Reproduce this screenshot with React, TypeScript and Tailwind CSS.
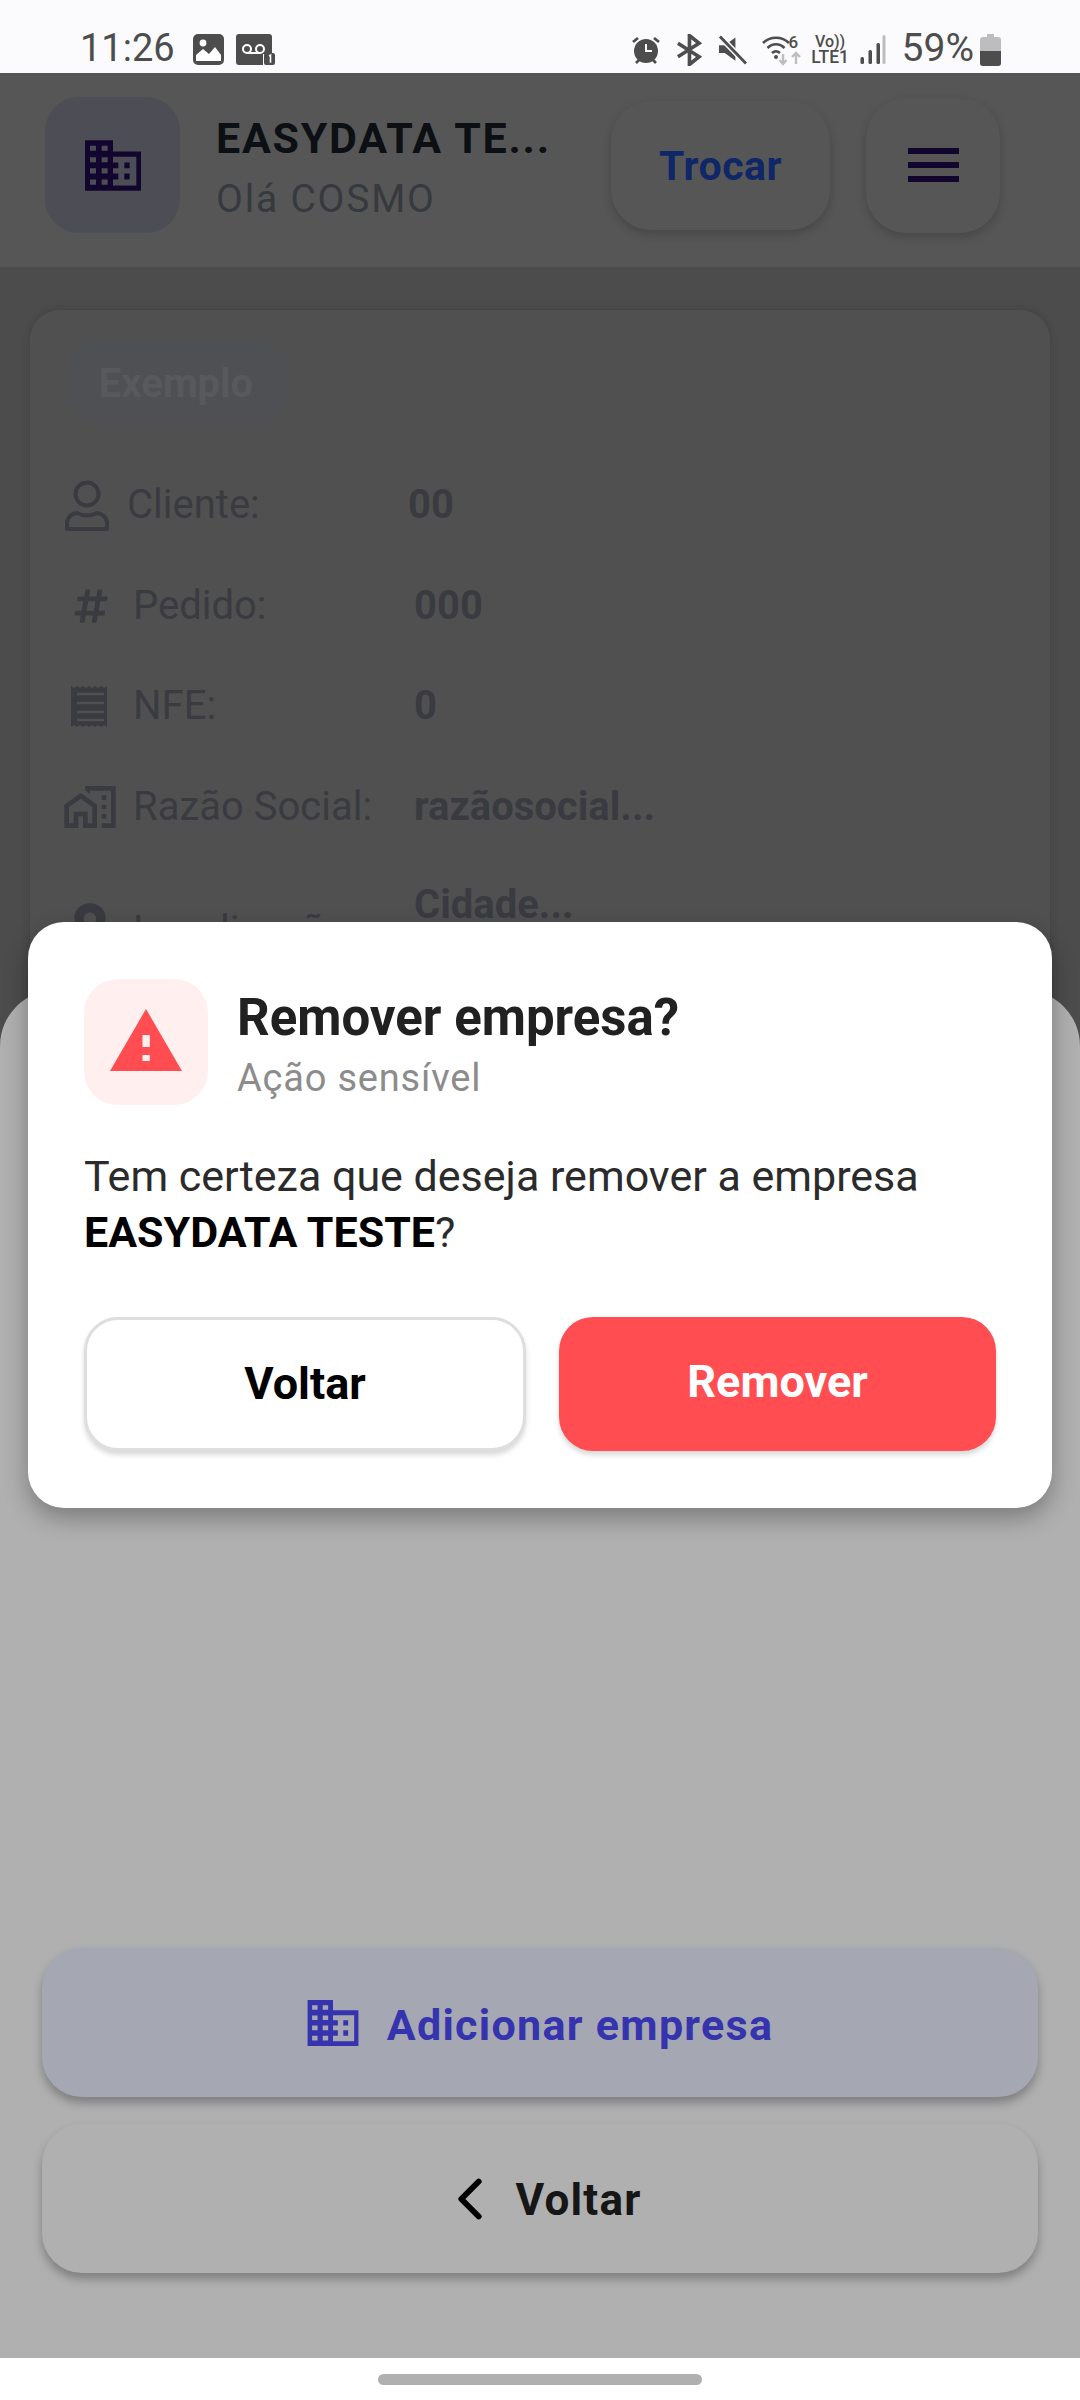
import React from "react";
import { IoChevronBack, IoLocationSharp } from "react-icons/io5";
import { MdOutlineHomeWork } from "react-icons/md";
import { FaHashtag } from "react-icons/fa";

function BuildingIcon({ className }: { className?: string }) {
  return (
    <svg viewBox="0 0 168 152" className={className} fill="currentColor" fillRule="evenodd">
      <path d="M0 0h84v34h84v118H0z M15 17v15h18V17z M50 17v15h18V17z M15 51v15h18V51z M50 51v15h18V51z M15 84v16h18V84z M50 84v16h18V84z M15 118v16h18v-16z M50 118v16h18v-16z M84 50v17h16v17H84v16h16v18H84v18h70V50z" />
      <path d="M118 67h16v17h-16z M118 100h16v18h-16z" />
    </svg>
  );
}

function PersonIcon() {
  return (
    <svg viewBox="0 0 44 51" className="w-[44px] h-[51px]" fill="none" stroke="currentColor" strokeWidth="4">
      <circle cx="22" cy="14" r="11.500" />
      <path d="M2 49v-6c0-6 6-10 10-10 3 1.500 6 2.500 10 2.500s7-1 10-2.500c4 0 10 4 10 10v6z" strokeLinejoin="round" />
    </svg>
  );
}

function ReceiptIcon() {
  return (
    <svg viewBox="0 0 39 41" className="w-[39px] h-[41px]">
      <path
        d="M0 0l3 2 3-2 3 2 3-2 3 2 3-2 3 2 3-2 3 2 3-2 3 2 3-2v41l-3-2-3 2-3-2-3 2-3-2-3 2-3-2-3 2-3-2-3 2-3-2-3 2z"
        fill="currentColor"
      />
      <path d="M6 8h27M6 17h27M6 26h27M6 34h27" stroke="#505050" strokeWidth="2.400" />
    </svg>
  );
}

function WarningIcon() {
  return (
    <svg viewBox="0 0 72 62" className="w-[72px] h-[62px] mb-[4px]">
      <path d="M36 0l36 62H0z" fill="#ff4d52" />
      <path d="M32.500 26h7.300v12h-7.300z M32.500 46h7.300v6h-7.300z" fill="#ffefef" />
    </svg>
  );
}

const rows = [
  { label: "Cliente:", value: "00", icon: <PersonIcon />, iconBox: "w-[62px]" },
  { label: "Pedido:", value: "000", icon: <FaHashtag className="w-[38px] h-[38px] ml-[7px]" />, iconBox: "w-[68px]" },
  { label: "NFE:", value: "0", icon: <span className="ml-[6px]"><ReceiptIcon /></span>, iconBox: "w-[68px]" },
  { label: "Razão Social:", value: "razãosocial...", icon: <MdOutlineHomeWork className="w-[56px] h-[56px] -ml-[3px]" />, iconBox: "w-[68px]" },
];

function StatusLeft() {
  return (
    <div className="flex items-center">
      <span className="pb-[3px] text-[38px] leading-none text-[#4d4d4d]">11:26</span>
      <svg viewBox="0 0 31 31" className="ml-[18px] w-[31px] h-[31px]">
        <rect width="31" height="31" rx="5" fill="#4d4d4d" />
        <circle cx="10" cy="9" r="3.400" fill="#fff" />
        <path d="M3 27v-6l7-6 6 5 6-7 6 8v6z" fill="#fff" />
      </svg>
      <svg viewBox="0 0 40 31" className="ml-[12px] w-[40px] h-[31px]">
        <path d="M3 0h30a3 3 0 0 1 3 3v17H27v11H3a3 3 0 0 1-3-3V3a3 3 0 0 1 3-3z" fill="#4d4d4d" />
        <circle cx="11" cy="15" r="4" fill="none" stroke="#fff" strokeWidth="2" />
        <circle cx="24" cy="15" r="4" fill="none" stroke="#fff" strokeWidth="2" />
        <path d="M11 19h13" stroke="#fff" strokeWidth="2" />
        <rect x="28" y="19" width="11" height="12" rx="2" fill="#4d4d4d" />
        <path d="M33 22l1.500-.8v7.500" fill="none" stroke="#fff" strokeWidth="1.600" />
      </svg>
    </div>
  );
}

function StatusRight() {
  return (
    <div className="flex items-center">
      <svg viewBox="0 0 30 30" className="w-[30px] h-[30px]">
        <circle cx="15" cy="16" r="12" fill="#4d4d4d" />
        <path d="M15 9v7h6" fill="none" stroke="#fff" strokeWidth="2" />
        <path d="M2 7l5-4M28 7l-5-4M5 28l3-3M25 28l-3-3" stroke="#4d4d4d" strokeWidth="2.800" />
      </svg>
      <svg viewBox="0 0 27 32" className="ml-[15px] w-[26px] h-[32px]">
        <path d="M2 9l22 14-10 8V1l10 8L2 23" fill="none" stroke="#4d4d4d" strokeWidth="3.800" />
      </svg>
      <svg viewBox="0 0 30 30" className="ml-[16px] w-[29px] h-[30px]">
        <path d="M1 10h6l11-8v24l-11-8H1z" fill="#4d4d4d" />
        <path d="M2 1l27 28" stroke="#fbfbfd" strokeWidth="6" />
        <path d="M2 1l27 28" stroke="#4d4d4d" strokeWidth="3" />
      </svg>
      <div className="relative ml-[15px] w-[44px] h-[32px]">
        <svg viewBox="0 0 44 32" className="w-[44px] h-[32px]">
          <path d="M1 9c7-7 19-7 26 0M5.500 14c5-5 12-5 17 0M10 19c3-2.500 5-2.500 8 0" fill="none" stroke="#4d4d4d" strokeWidth="2.600" />
          <circle cx="14" cy="23" r="2" fill="#4d4d4d" />
          <path d="M21 20v10M17.500 26l3.500 4 3.500-4" fill="none" stroke="#bdbdbd" strokeWidth="2.400" />
          <path d="M34 30V19M30 23l4-4 4 4" fill="none" stroke="#bdbdbd" strokeWidth="2.400" />
        </svg>
        <span className="absolute left-[27px] -top-[2px] text-[17px] leading-[20px] font-medium text-[#4d4d4d]">6</span>
      </div>
      <div className="ml-[6px] w-[37px] flex flex-col items-center text-[#4d4d4d] font-medium">
        <span className="text-[16px] leading-[15px]">Vo))</span>
        <span className="text-[17.500px] leading-[17px]">LTE1</span>
      </div>
      <svg viewBox="0 0 26 30" className="ml-[10px] w-[27px] h-[30px]">
        <rect x="1" y="22" width="3.500" height="7" rx="1.500" fill="#4d4d4d" />
        <rect x="9" y="15" width="3.500" height="14" rx="1.500" fill="#4d4d4d" />
        <rect x="17" y="8" width="3.500" height="21" rx="1.500" fill="#4d4d4d" />
        <rect x="23" y="0" width="3" height="29" rx="1.500" fill="#bdbdbd" />
      </svg>
      <span className="ml-[16px] pb-[3px] text-[39px] leading-none text-[#4d4d4d]">59%</span>
      <svg viewBox="0 0 21 32" className="ml-[6px] w-[21px] h-[32px]">
        <path d="M7 0h7v3h4a3 3 0 0 1 3 3v23a3 3 0 0 1-3 3H3a3 3 0 0 1-3-3V6a3 3 0 0 1 3-3h4z" fill="#bdbdbd" />
        <path d="M0 17h21v12a3 3 0 0 1-3 3H3a3 3 0 0 1-3-3z" fill="#4d4d4d" />
      </svg>
    </div>
  );
}

export default function App() {
  return (
    <div
      className="relative flex flex-col w-[1080px] h-[2400px] overflow-hidden bg-[#4c4c4c]"
      style={{ fontFamily: "Roboto, sans-serif" }}
    >
      {/* Status bar */}
      <div className="h-[73px] shrink-0 flex items-start justify-between pt-[29px] pl-[80px] pr-[79px] bg-[#fbfbfd]">
        <StatusLeft />
        <StatusRight />
      </div>

      {/* Header */}
      <div className="h-[194px] shrink-0 flex items-center pl-[45px] pr-[80px] pb-[10px] bg-[#565656]">
        <div className="w-[135px] h-[136px] rounded-[34px] bg-[#4d4e55] flex items-center justify-center">
          <BuildingIcon className="w-[56px] h-[51px] text-[#13062e]" />
        </div>
        <div className="ml-[36px] flex-1 pt-[4px]">
          <div className="text-[43px] leading-[50px] font-bold tracking-[1.700px] text-[#0c1014]">EASYDATA TE...</div>
          <div className="mt-[14px] text-[39px] leading-[44px] tracking-[1.800px] text-[#36393e]">Olá COSMO</div>
        </div>
        <button className="w-[219px] h-[129px] pt-[4px] rounded-[40px] bg-[#565656] shadow-[0_4px_10px_rgba(0,0,0,0.18)] text-[41px] font-bold tracking-[0.5px] text-[#0f2767]">
          Trocar
        </button>
        <button className="ml-[36px] w-[134px] h-[135px] rounded-[40px] bg-[#565656] shadow-[0_4px_10px_rgba(0,0,0,0.18)] flex flex-col items-center justify-center gap-[8px]">
          <span className="w-[51px] h-[6px] bg-[#13062e]" />
          <span className="w-[51px] h-[6px] bg-[#13062e]" />
          <span className="w-[51px] h-[6px] bg-[#13062e]" />
        </button>
      </div>

      {/* Main card, mostly behind the sheet */}
      <div className="flex-1 px-[30px] pt-[43px]">
        <div className="rounded-[30px] bg-[#505050] shadow-[0_0_8px_rgba(0,0,0,0.15)] pt-[33px] pl-[35px] pr-[30px] h-[1000px]">
          <div className="ml-[3px] w-[220px] h-[77px] pt-[4px] pr-[4px] rounded-[26px] bg-[#4e5053] flex items-center justify-center text-[40px] font-bold text-[#58595c]">
            Exemplo
          </div>
          <div className="mt-[35px] text-[#3a3b40]">
            {rows.map((r) => (
              <div key={r.label} className="flex items-center h-[100.5px]">
                <div className={`${r.iconBox} flex items-center shrink-0`}>{r.icon}</div>
                <div className="w-[281px] text-[40px] leading-none shrink-0">{r.label}</div>
                <div className="text-[40px] leading-none font-bold">{r.value}</div>
              </div>
            ))}
            <div className="flex items-start">
              <div className="w-[68px] pt-[43px] shrink-0">
                <IoLocationSharp className="w-[50px] h-[50px]" />
              </div>
              <div className="w-[281px] pt-[54px] text-[40px] leading-none shrink-0">Localização:</div>
              <div className="pt-[26px] text-[40px] leading-[44px] font-bold">Cidade...</div>
            </div>
          </div>
        </div>
      </div>

      {/* Bottom sheet */}
      <div className="absolute left-0 right-0 top-[990px] bottom-[42px] rounded-t-[56px] bg-[#b0b0b0] flex flex-col justify-end px-[42px] pb-[85px] gap-[27px]">
        <button className="h-[149px] rounded-[40px] bg-[#a5a8b2] shadow-[0_6px_10px_rgba(0,0,0,0.28)] flex items-center justify-center gap-[28px] text-[#3533ae]">
          <BuildingIcon className="w-[52px] h-[46px]" />
          <span className="pt-[5px] text-[43px] font-bold tracking-[1.300px]">Adicionar empresa</span>
        </button>
        <button className="h-[149px] rounded-[40px] bg-[#b0b0b0] shadow-[0_6px_10px_rgba(0,0,0,0.28)] flex items-center justify-center gap-[15px] text-[#161616]">
          <IoChevronBack className="w-[62px] h-[62px] text-black" />
          <span className="pt-[2px] text-[44px] font-bold tracking-[1.200px]">Voltar</span>
        </button>
      </div>

      {/* Navigation bar */}
      <div className="absolute left-0 right-0 bottom-0 h-[42px] bg-white flex justify-center pt-[16px]">
        <div className="w-[324px] h-[11px] rounded-full bg-[#b0b0b0]" />
      </div>

      {/* Confirm dialog */}
      <div className="absolute left-[28px] top-[922px] w-[1024px] h-[586px] rounded-[36px] bg-white shadow-[0_10px_24px_rgba(0,0,0,0.3)] pl-[56px] pr-[56px] pt-[57px]">
        <div className="flex items-center">
          <div className="w-[124px] h-[126px] rounded-[34px] bg-[#ffefef] flex items-center justify-center">
            <WarningIcon />
          </div>
          <div className="ml-[29px] pt-[6px]">
            <div className="text-[51px] leading-[56px] font-bold text-[#212121]">Remover empresa?</div>
            <div className="mt-[10px] text-[38px] leading-[44px] tracking-[0.8px] text-[#8c8c8c]">Ação sensível</div>
          </div>
        </div>
        <p className="mt-[43px] text-[43px] leading-[56px] text-[#2b2b2b]">
          Tem certeza que deseja remover a empresa <strong className="font-bold text-black">EASYDATA TESTE</strong>?
        </p>
        <div className="mt-[57px] flex gap-[33px]">
          <button className="w-[442px] h-[134px] rounded-[34px] bg-white border-[3px] border-[#dedede] shadow-[0_4px_5px_rgba(0,0,0,0.15)] text-[45px] font-bold text-black">
            Voltar
          </button>
          <button className="w-[437px] h-[134px] rounded-[34px] bg-[#ff4d52] shadow-[0_4px_5px_rgba(0,0,0,0.15)] text-[45px] font-bold text-white pb-[4px]">
            Remover
          </button>
        </div>
      </div>
    </div>
  );
}
